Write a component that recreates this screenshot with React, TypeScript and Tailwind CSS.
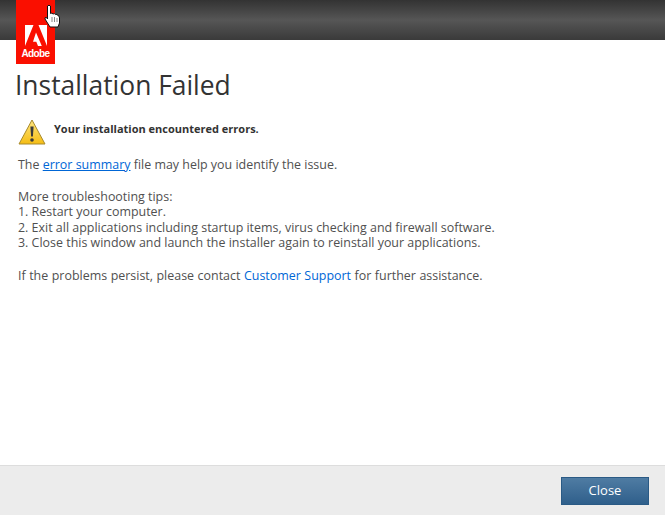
export default function App() {
  return (
    <div className="relative flex h-[515px] w-[665px] flex-col overflow-hidden bg-white font-['Open_Sans',sans-serif] text-[12.450px] text-[#505050]">
      <header className="h-10 shrink-0 bg-gradient-to-b from-[#333333] via-[#565656] to-[#3a3a3a] pl-4">
        <div className="flex h-16 w-[39px] flex-col items-center justify-end bg-[#fa0f00] pb-[5px]">
          <svg width="22" height="21" viewBox="0 0 22 21" className="mb-[3px]">
            <path fill="#fff" d="M13.500 0H22v21zM8.500 0H0v21zM11 7.500l5.800 13.500h-3.800l-1.700-4.200H8z" />
          </svg>
          <span className="font-['Liberation_Sans',sans-serif] text-[10px] leading-[10px] font-bold tracking-[-0.6px] text-white">Adobe</span>
        </div>
      </header>
      <main className="flex-1 pl-[15px]">
        <h1 className="mt-[27px] text-[26.400px] leading-[36px] text-[#333]">Installation Failed</h1>
        <div className="mt-[16px] flex items-center gap-[8px] pl-[3px]">
          <svg width="28" height="27" viewBox="0 0 28 27">
            <defs>
              <linearGradient id="warn" x1="0" y1="0" x2="0" y2="1">
                <stop offset="0" stopColor="#ffe680" />
                <stop offset="1" stopColor="#f5bd14" />
              </linearGradient>
            </defs>
            <path fill="url(#warn)" stroke="#a88a2c" strokeLinejoin="round" d="M14 1 27 25H1z" />
            <path fill="#3a3a3a" d="M12.400 7.500h3.200l-.7 10h-1.800z" />
            <circle cx="14" cy="21" r="1.800" fill="#3a3a3a" />
          </svg>
          <span className="relative -top-[3px] text-[11px] font-bold text-[#333]">Your installation encountered errors.</span>
        </div>
        <div className="mt-[11px] pl-[3px] leading-[15.500px]">
          <p>
            The <a className="text-[#0066d6] underline">error summary</a> file may help you identify the issue.
          </p>
          <p className="mt-[16px]">More troubleshooting tips:</p>
          <p>1. Restart your computer.</p>
          <p>2. Exit all applications including startup items, virus checking and firewall software.</p>
          <p>3. Close this window and launch the installer again to reinstall your applications.</p>
          <p className="mt-[17px] [word-spacing:0.3px]">
            If the problems persist, please contact <a className="text-[#0066d6]">Customer Support</a> for further assistance.
          </p>
        </div>
      </main>
      <footer className="flex h-[50px] shrink-0 items-start justify-end border-t border-[#dddddd] bg-[#ececec] pt-[11px] pr-4">
        <button className="h-[28px] w-[88px] border border-[#2a5a85] bg-gradient-to-b from-[#4f7ca3] to-[#2f5f8b] text-[13px] text-white">Close</button>
      </footer>
      <svg className="absolute left-[44px] top-[4px] z-10" width="17" height="25" viewBox="0 0 17 25">
        <path fill="#fff" stroke="#111" strokeLinejoin="round" d="M3.500 2Q5 .5 6.500 2V9.500Q8 8.500 9 10Q10.500 9 11.500 10.500Q13 10 14 11.500Q15.500 12 15.500 14V19L14 23H6L1 15Q.5 13 2.500 13.500L3.500 15Z" />
        <path stroke="#555" strokeWidth="0.700" fill="none" d="M8 13v5M10.500 13v5M13 14v4" />
      </svg>
    </div>
  );
}
